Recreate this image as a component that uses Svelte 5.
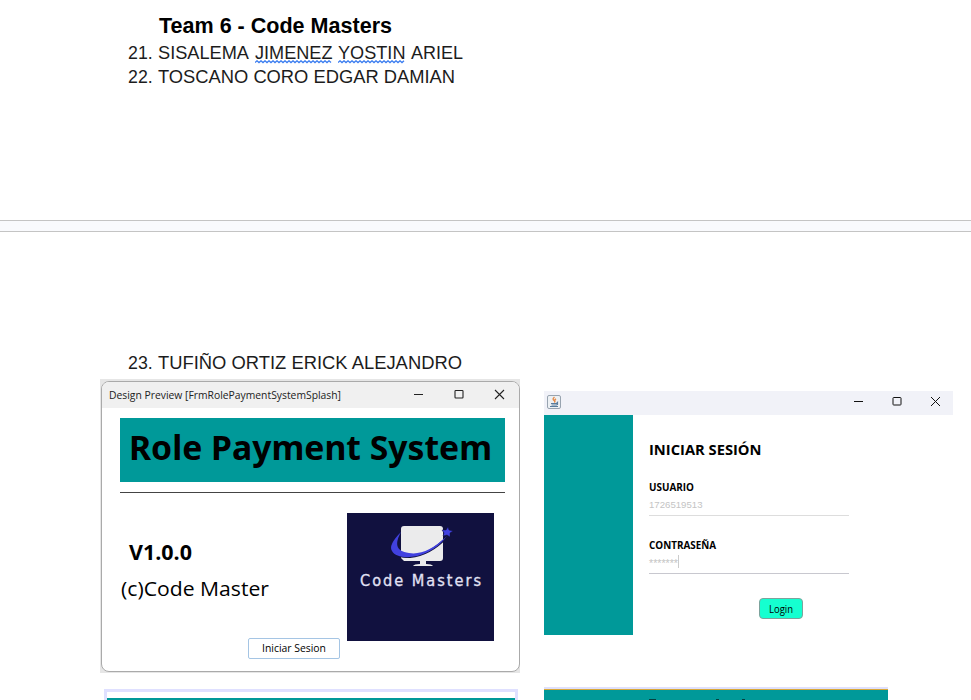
<script>
  const members = [
    { n: '21.', parts: [['SISALEMA', 91, false], ['JIMENEZ', 77.5, true], ['YOSTIN', 67.5, true], ['ARIEL', 52, false]] },
    { n: '22.', parts: [['TOSCANO CORO EDGAR DAMIAN', 297, false]] }
  ];
  const nextMembers = [
    { n: '23.', parts: [['TUFIÑO ORTIZ ERICK ALEJANDRO', 304, false]] }
  ];
  const wave = (w) => {
    let d = 'M0 2.6';
    for (let x = 2; x <= w; x += 2) d += ` L${x} ${x % 4 ? 0.8 : 2.6}`;
    return d;
  };
</script>

{#snippet label(text, width, size, cls, adjust = 'spacingAndGlyphs')}
  <svg class="label" {width} height={size}><text class={cls} x="0" y={size} font-size={size} textLength={width} lengthAdjust={adjust}>{text}</text></svg>
{/snippet}

{#snippet list(items)}
  <ol>
    {#each items as m}
      <li>
        {@render label(m.n, 24.7, 18, 'arial soft')}
        {#each m.parts as [t, w, flagged]}
          <span class="word">
            {@render label(t, w, 18, 'arial soft')}
            {#if flagged}<svg class="wave" width={w} height="4"><path d={wave(w)} /></svg>{/if}
          </span>
        {/each}
      </li>
    {/each}
  </ol>
{/snippet}

{#snippet controls(gap)}
  <svg class="controls" width={gap * 2 + 12} height="12" fill="none">
    <path d="M1 6.5h9" />
    <rect x={gap + 1.5} y="2.5" width="8" height="7.5" rx=".7" />
    <path d="M{gap * 2 + 1} 2l9 9m0-9l-9 9" />
  </svg>
{/snippet}

<main>
  <section class="sheet first">
    <h1>{@render label('Team 6 - Code Masters', 233, 22, 'arial bold')}</h1>
    {@render list(members)}
  </section>
  <div class="page-gap"></div>
  <section class="sheet second">
    {@render list(nextMembers)}
    <div class="columns">
      <div class="left">
        <div class="frame">
          <div class="window">
            <header>
              {@render label('Design Preview [FrmRolePaymentSystemSplash]', 232, 11.6, 'ui dark')}
              {@render controls(40.5)}
            </header>
            <div class="banner">{@render label('Role Payment System', 363, 34, 'title')}</div>
            <div class="rule"></div>
            <div class="body">
              <div class="info">
                <div class="version">{@render label('V1.0.0', 63, 20.5, 'ui bold')}</div>
                <div class="credit">{@render label('(c)Code Master', 148, 20.8, 'ui')}</div>
                <button class="start">{@render label('Iniciar Sesion', 64, 11.3, 'ui')}</button>
              </div>
              <div class="logo">
                <svg width="62" height="42" viewBox="0 0 62 42">
                  <path fill="#ebebec" d="M14 0h36q3 0 3 3v29q0 3-3 3H36v3q6 0 7 2H23q1-2 7-2v-3H14l-3-3V3q0-3 3-3z" />
                  <path fill="none" stroke="#11113f" stroke-width="2" d="M2 22Q3 32 20 31Q40 29 57 11" />
                  <path fill="#4141e0" d="M11 6Q-2 19 2 25C8 36 41 33 57 10Q36 30 19 27C5 25 5 17 11 6z" />
                  <path fill="#4141e0" stroke="#11113f" stroke-width=".5" d="M58 1l1 3 4 1-3 2v4l-3-2-4 1 1-3-2-3 4 0z" />
                </svg>
                {@render label('Code Masters', 121, 16.2, 'pixel', 'spacing')}
              </div>
            </div>
          </div>
        </div>
        <div class="next-window"><div></div></div>
      </div>
      <div class="right">
        <div class="login">
          <header>
            <svg class="java" width="14" height="14" fill="none">
              <rect x=".5" y=".5" width="13" height="13" rx="1.5" fill="#edf1f4" stroke="#98a4b0" />
              <path d="M7.5 2Q5 4 7 5.5T7 7M9 4Q7 5 8 7" stroke="#e58b4a" stroke-width="1.4" />
              <path d="M4 8.5h5.5l1-1v2l-1 .5H4.5M3 11.5h8" stroke="#587c9c" stroke-width="1.2" />
            </svg>
            {@render controls(38.5)}
          </header>
          <div class="login-body">
            <div class="side"></div>
            <form onsubmit={(e) => e.preventDefault()}>
              <div class="heading">{@render label('INICIAR SESIÓN', 112.5, 14.8, 'ui bold')}</div>
              {@render label('USUARIO', 45, 10.4, 'ui bold')}
              <div class="field">{@render label('1726519513', 53.5, 9.8, 'arial faint')}</div>
              {@render label('CONTRASEÑA', 67, 10.4, 'ui bold')}
              <div class="field pass">{@render label('*******', 29, 11, 'arial faint')}<i></i></div>
              <button class="enter">{@render label('Login', 24, 10.8, 'ui')}</button>
            </form>
          </div>
        </div>
        <div class="next-banner"><i class="cap"></i><i class="stem one"></i><i class="stem two"></i></div>
      </div>
    </div>
  </section>
</main>

<style>
  :global(body) { background: #fff; overflow: hidden; }
  main { width: 971px; height: 700px; overflow: hidden; display: flex; flex-direction: column; background: #fff; }
  h1, ol { margin: 0; padding: 0; }
  button { padding: 0; box-sizing: border-box; display: flex; justify-content: center; }
  .label { display: block; flex: none; overflow: visible; }
  .arial { font-family: "Liberation Sans", Arial, sans-serif; fill: #000; }
  .soft { fill: #1c1c1c; }
  .ui { font-family: "Open Sans", "Noto Sans", sans-serif; fill: #000; }
  .bold { font-weight: 700; }
  .dark { fill: #222; }
  .faint { fill: #c4c4c4; }
  .title { font-family: "Noto Sans", "Open Sans", sans-serif; font-weight: 700; fill: #000; }
  .pixel { font-family: "DejaVu Sans Condensed", "DejaVu Sans", sans-serif; fill: #e2e2f4; stroke: #e2e2f4; stroke-width: .3; }

  .sheet { box-sizing: border-box; }
  .first { height: 220px; padding-top: 11px; }
  h1 { padding-left: 159px; height: 22px; margin-bottom: 8px; }
  ol { list-style: none; padding-left: 128px; }
  li { display: flex; gap: 5.6px; height: 18px; margin-bottom: 6px; }
  .word { position: relative; }
  .wave { position: absolute; left: 0; top: 18.5px; fill: none; stroke: #3b7df0; stroke-width: 1.3; }
  .page-gap { height: 10px; flex: none; background: #f9fafd; border: solid #c4c4c4; border-width: 1px 0; }
  .second { height: 468px; padding-top: 119px; }
  .second ol { height: 28px; }
  .columns { display: flex; gap: 24px; padding-left: 100px; }

  .frame { width: 420px; height: 294px; box-sizing: border-box; padding: 2px 0 1px 1px; background: #e6e6e6; }
  .window { height: 291px; box-sizing: border-box; border: 1px solid #aaa; border-radius: 8px; background: #fff; overflow: hidden; }
  .window header { height: 26px; background: #f0f0f0; display: flex; justify-content: space-between; padding: 6px 13px 0 7px; box-sizing: border-box; }
  .window header .label { margin-top: -.6px; }
  .controls { stroke: #222; stroke-width: 1.1; display: block; }
  .banner { margin: 10px 14px 0 18px; height: 64px; background: #009999; padding: 8px 0 0 8.5px; box-sizing: border-box; }
  .rule { margin: 10px 14px 0 18px; height: 1px; background: #444; }
  .body { display: flex; justify-content: space-between; padding: 20px 25px 0 18px; }
  .info { width: 220px; display: flex; flex-direction: column; padding-top: 26px; }
  .version { padding-left: 9px; margin-bottom: 15.7px; }
  .credit { padding-left: .7px; }
  .start { align-self: flex-end; width: 92px; height: 21px; margin-top: 42px; border: 1px solid #a5c5e4; border-radius: 2px; background: #fff; padding-top: 2.2px; align-items: flex-start; }
  .logo { width: 147px; height: 128px; box-sizing: border-box; background: #11113f; padding: 13px 0 0 13px; }
  .logo > svg:first-child { display: block; margin-left: 29.5px; margin-bottom: 2px; overflow: visible; }
  .next-window { width: 414px; height: 40px; box-sizing: border-box; margin: 16px 0 0 4px; border: 3px solid #dfe0ff; padding-top: 6px; }
  .next-window div { height: 30px; background: #009999; }

  .right { padding-top: 12px; }
  .login { width: 409px; height: 244px; }
  .login header { height: 24px; background: #f1f2f8; display: flex; justify-content: space-between; align-items: flex-start; box-sizing: border-box; padding: 4px 11px 0 3px; }
  .login .controls { stroke: #111; stroke-width: 1; }
  .login-body { display: flex; height: 220px; }
  .side { width: 89px; background: #009999; }
  form { padding: 25.4px 0 0 16px; width: 200px; }
  .heading { margin-bottom: 26.2px; }
  .field { height: 24.5px; margin-bottom: 22.9px; box-sizing: border-box; border-bottom: 1px solid #ddd; padding-top: 6.2px; display: flex; }
  .pass { border-bottom: 1.5px solid #c8c8cf; padding-top: 6.2px; margin-bottom: 24px; }
  .pass i { width: 1px; height: 13px; background: #ccc; margin-top: -.5px; }
  .enter { margin-left: 110px; width: 44px; height: 21px; border: 1px solid #7da29c; border-radius: 4px; background: #15ffd0; padding-top: 2.8px; align-items: flex-start; }
  .next-banner { width: 344px; height: 20px; margin-top: 52px; box-sizing: border-box; border-top: 2px solid #dfe0fc; background: linear-gradient(#d8a838 1px, #009999 1px); display: flex; padding: 10px 0 0 105px; }
  .next-banner i { height: 6px; background: #064040; }
  .cap { width: 7px; }
  .stem { width: 3px; }
  .one { margin-left: 60px; }
  .two { margin-left: 23px; }
</style>
